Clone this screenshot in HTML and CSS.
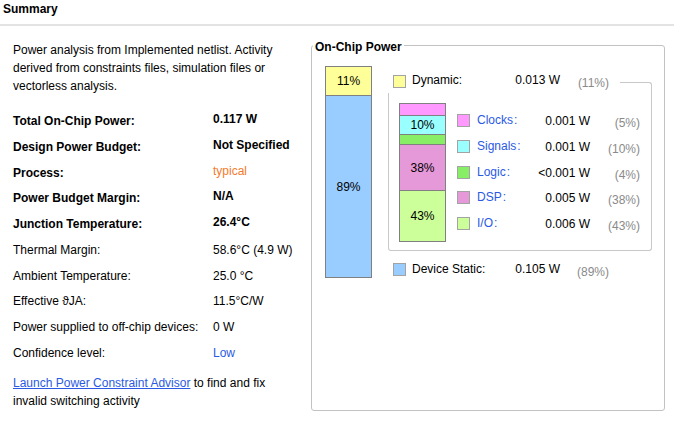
FILE: index.html
```html
<!DOCTYPE html>
<html>
<head>
<meta charset="utf-8">
<title>Summary</title>
<link rel="stylesheet" href="styles.css">
</head>
<body>
<div class="header">Summary</div>
<div class="divider"></div>
<div class="content">
  <div class="left">
    <p class="intro">Power analysis from Implemented netlist. Activity<br>derived from constraints files, simulation files or<br>vectorless analysis.</p>
    <div class="rows">
      <div class="row main"><span class="lbl">Total On-Chip Power:</span><span class="val bold">0.117 W</span></div>
      <div class="row main"><span class="lbl">Design Power Budget:</span><span class="val bold">Not Specified</span></div>
      <div class="row main"><span class="lbl">Process:</span><span class="val orange">typical</span></div>
      <div class="row main"><span class="lbl">Power Budget Margin:</span><span class="val bold">N/A</span></div>
      <div class="row main"><span class="lbl">Junction Temperature:</span><span class="val bold">26.4°C</span></div>
      <div class="row"><span class="lbl">Thermal Margin:</span><span class="val">58.6°C (4.9 W)</span></div>
      <div class="row"><span class="lbl">Ambient Temperature:</span><span class="val">25.0 °C</span></div>
      <div class="row"><span class="lbl">Effective ϑJA:</span><span class="val">11.5°C/W</span></div>
      <div class="row"><span class="lbl">Power supplied to off-chip devices:</span><span class="val">0 W</span></div>
      <div class="row"><span class="lbl">Confidence level:</span><span class="val blue-text">Low</span></div>
    </div>
    <p class="advisor"><a class="link">Launch Power Constraint Advisor</a> to find and fix<br>invalid switching activity</p>
  </div>

  <div class="group">
    <div class="group-title">On-Chip Power</div>
    <div class="chart">
      <div class="bar big">
        <div class="seg c-dynamic h-dyn">11%</div>
        <div class="seg c-static h-static">89%</div>
      </div>
      <div class="breakdown">
        <div class="sum-row dyn">
          <span class="sw c-dynamic"></span>
          <span class="sum-name">Dynamic:</span>
          <span class="sum-val">0.013 W</span>
          <span class="sum-pct">(11%)</span>
          <span class="corner"></span>
        </div>
        <div class="inner">
          <div class="bar sub">
            <div class="seg c-clocks h-clocks"></div>
            <div class="seg c-signals h-signals">10%</div>
            <div class="seg c-logic h-logic"></div>
            <div class="seg c-dsp h-dsp">38%</div>
            <div class="seg c-io h-io">43%</div>
          </div>
          <div class="legend">
            <div class="lg-row"><span class="sw c-clocks"></span><span class="lg-name">Clocks<span class="colon">:</span></span><span class="lg-val">0.001 W</span><span class="lg-pct">(5%)</span></div>
            <div class="lg-row"><span class="sw c-signals"></span><span class="lg-name">Signals<span class="colon">:</span></span><span class="lg-val">0.001 W</span><span class="lg-pct">(10%)</span></div>
            <div class="lg-row"><span class="sw c-logic"></span><span class="lg-name">Logic<span class="colon">:</span></span><span class="lg-val">&lt;0.001 W</span><span class="lg-pct">(4%)</span></div>
            <div class="lg-row"><span class="sw c-dsp"></span><span class="lg-name">DSP<span class="colon">:</span></span><span class="lg-val">0.005 W</span><span class="lg-pct">(38%)</span></div>
            <div class="lg-row"><span class="sw c-io"></span><span class="lg-name">I/O<span class="colon">:</span></span><span class="lg-val">0.006 W</span><span class="lg-pct">(43%)</span></div>
          </div>
        </div>
        <div class="sum-row stat">
          <span class="sw c-static"></span>
          <span class="sum-name">Device Static:</span>
          <span class="sum-val">0.105 W</span>
          <span class="sum-pct">(89%)</span>
        </div>
      </div>
    </div>
  </div>
</div>
</body>
</html>
```
FILE: styles.css
```css
* { box-sizing: border-box; }

body {
  margin: 0;
  width: 674px;
  height: 427px;
  overflow: hidden;
  background: #fff;
  color: #000;
  font-family: "Liberation Sans", Arial, sans-serif;
  font-size: 12px;
}

.header {
  height: 24px;
  padding: 2px 0 0 3px;
  line-height: 14px;
  font-weight: bold;
}

.divider {
  height: 2px;
  background: #e3e3e3;
}

.content {
  display: flex;
  align-items: flex-start;
}

/* left column */
.left {
  width: 311px;
  padding-left: 13px;
}

.intro {
  margin: 15px 0 0;
  line-height: 18px;
}

.rows { margin-top: 19px; }

.row {
  display: grid;
  grid-template-columns: 200px auto;
  align-items: start;
  height: 25.75px;
  line-height: 14px;
}

.row.main .lbl { font-weight: bold; }
.row.main .val { margin-top: -2px; }
.bold { font-weight: bold; }
.orange { color: #f47a2c; }
.blue-text { color: #2a5ae4; }

.advisor {
  margin: 2.5px 0 0;
  line-height: 18px;
}

.link {
  color: #2a5ae4;
  text-decoration: underline;
}

/* right group box */
.group {
  width: 354px;
  height: 366px;
  margin-top: 19px;
  border: 1px solid #c2c2c2;
  border-radius: 3px;
}

.group-title {
  width: max-content;
  margin: -6px 0 0 1px;
  padding: 0 2px;
  background: #fff;
  font-weight: bold;
  line-height: 14px;
}

.chart {
  display: flex;
  align-items: flex-start;
  margin-top: 12px;
  padding-left: 13px;
}

.bar {
  display: flex;
  flex-direction: column;
  width: 47px;
  border: 1px solid #808080;
  flex: none;
}

.bar .seg {
  display: flex;
  align-items: center;
  justify-content: center;
  line-height: 14px;
}

.bar .seg + .seg { border-top: 1px solid #808080; }

.big { height: 212px; }
.h-dyn { height: 28px; }
.h-static { height: 182px; }

.sub { height: 139px; }
.h-clocks { height: 11px; }
.h-signals { height: 19px; }
.h-logic { height: 10px; }
.h-dsp { height: 46px; }
.h-io { height: 51px; }

/* colours */
.c-dynamic { background: #ffff99; }
.c-static { background: #99ccff; }
.c-clocks { background: #ff99ff; }
.c-signals { background: #99ffff; }
.c-logic { background: #88ee66; }
.c-dsp { background: #e699d9; }
.c-io { background: #ccff99; }

.breakdown {
  width: 264px;
  margin-left: 16px;
}

.sw {
  flex: none;
  width: 13px;
  height: 13px;
  border: 1px solid #a3a3a3;
}

.sum-row {
  display: flex;
  align-items: flex-start;
  height: 22px;
  padding-left: 5px;
  line-height: 14px;
}

.sum-name { width: 88px; margin-left: 6px; }
.sum-val { width: 60px; text-align: right; }
.sum-pct { width: 49px; text-align: right; color: #8a8a8a; }

.dyn { margin-top: 5px; }
.dyn .sw { margin-top: 4px; }
.dyn .sum-name, .dyn .sum-val { margin-top: 2px; }
.dyn .sum-pct { margin-top: 5px; }

.corner {
  flex: 1;
  align-self: stretch;
  margin: 11px 0 0 11px;
  border-top: 1px solid #c8c8c8;
  border-right: 1px solid #c8c8c8;
  border-top-right-radius: 3px;
}

.stat { margin-top: 11px; }
.stat .sw { margin-top: 1px; }
.stat .sum-pct { margin-top: 3px; }

.inner {
  display: flex;
  align-items: flex-start;
  padding: 10px 0 8px 10px;
  border: 1px solid #c8c8c8;
  border-top: none;
  border-radius: 0 0 3px 3px;
}

.legend {
  margin: 10px 0 0 11px;
}

.lg-row {
  display: flex;
  align-items: flex-start;
  height: 25.75px;
  line-height: 14px;
}

.lg-row .sw { margin-top: 1px; }

.lg-name {
  width: 60px;
  margin-left: 7px;
  color: #2a5ae4;
}

.colon { margin-left: 1px; }

.lg-val { width: 53px; margin-top: 1px; text-align: right; }
.lg-pct { width: 50px; margin-top: 3px; text-align: right; color: #8a8a8a; }
```
